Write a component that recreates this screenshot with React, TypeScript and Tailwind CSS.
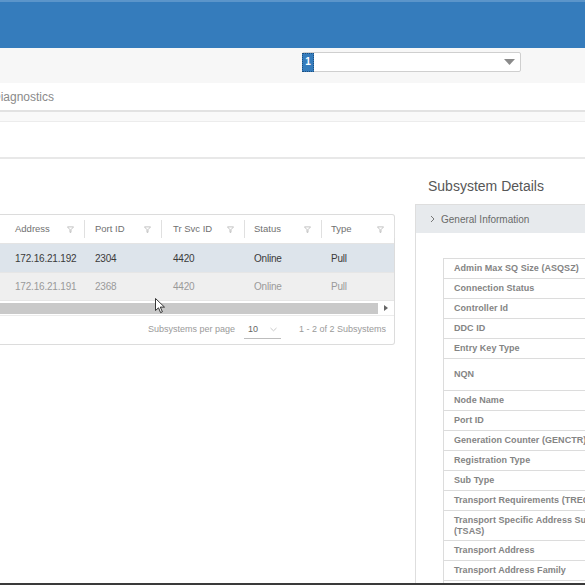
import React from "react";

const FilterIcon = () => (
  <svg width="7" height="7" viewBox="0 0 8 8" className="shrink-0">
    <path d="M0.5 1 H7.5 L4.6 4.2 V7.2 H3.4 V4.2 Z" fill="none" stroke="#b5b5b5" strokeWidth="0.9" />
  </svg>
);

type Col = { title: string; w: string; pl: string };
const cols: Col[] = [
  { title: "Address", w: "w-[85px]", pl: "pl-[15px]" },
  { title: "Port ID", w: "w-[77px]", pl: "pl-[10px]" },
  { title: "Tr Svc ID", w: "w-[83px]", pl: "pl-[11px]" },
  { title: "Status", w: "w-[77px]", pl: "pl-[9px]" },
  { title: "Type", w: "w-[73px]", pl: "pl-[9px]" },
];

const rows = [
  { cells: ["172.16.21.192", "2304", "4420", "Online", "Pull"], bg: "bg-[#dde4eb]", color: "text-[#3a3a3a]", h: "h-[29px]" },
  { cells: ["172.16.21.191", "2368", "4420", "Online", "Pull"], bg: "bg-[#efefef]", color: "text-[#9a9a9a]", h: "h-[28px]" },
];

const details: { label: React.ReactNode; h: string }[] = [
  { label: "Admin Max SQ Size (ASQSZ)", h: "h-[20px]" },
  { label: "Connection Status", h: "h-[20px]" },
  { label: "Controller Id", h: "h-[20px]" },
  { label: "DDC ID", h: "h-[20px]" },
  { label: "Entry Key Type", h: "h-[20px]" },
  { label: "NQN", h: "h-[32px]" },
  { label: "Node Name", h: "h-[20px]" },
  { label: "Port ID", h: "h-[20px]" },
  { label: "Generation Counter (GENCTR)", h: "h-[20px]" },
  { label: "Registration Type", h: "h-[20px]" },
  { label: "Sub Type", h: "h-[20px]" },
  { label: "Transport Requirements (TREQ)", h: "h-[20px]" },
  {
    label: (
      <>
        Transport Specific Address Subtype
        <br />
        (TSAS)
      </>
    ),
    h: "h-[30px]",
  },
  { label: "Transport Address", h: "h-[20px]" },
  { label: "Transport Address Family", h: "h-[20px]" },
  { label: "Transport Type", h: "h-[20px]" },
];

export default function App() {
  return (
    <div
      className="relative w-[585px] h-[585px] overflow-hidden bg-white flex flex-col"
      style={{ fontFamily: '"Liberation Sans", Arial, sans-serif' }}
    >
      {/* Blue header */}
      <div className="h-[48px] shrink-0 bg-[#357cbc] border-t-[2px] border-[#5b95ca]" />

      {/* Toolbar band */}
      <div className="h-[35px] shrink-0 bg-[#f7f7f7] pl-[302px] pt-[4px]">
        <div className="w-[219px] h-[20px] bg-white border border-[#cfcfcf] rounded-[2px] flex items-center justify-between pr-[5px]">
          <div className="w-[12px] h-[19px] ml-[-1px] bg-[#357cbc] border border-dotted border-[#1d4f80] text-white text-[10px] font-bold leading-none flex items-center justify-center">
            1
          </div>
          <svg width="11" height="6" viewBox="0 0 11 6">
            <path d="M0 0 H11 L5.5 6 Z" fill="#8a8a8a" />
          </svg>
        </div>
      </div>

      {/* Tabs row */}
      <div className="h-[29px] shrink-0 bg-white border-b-[2px] border-[#e2e2e2] flex items-center overflow-hidden">
        <span className="ml-[-8px] text-[12px] text-[#8a8a8a]">Diagnostics</span>
      </div>
      <div className="h-[10px] shrink-0 bg-[#f9f9f9] border-b border-[#ececec]" />
      <div className="h-[37px] shrink-0 bg-white border-b-[2px] border-[#e8e8e8]" />

      {/* Content */}
      <div className="flex-1 flex gap-[20px] min-h-0">
        {/* Left table */}
        <div className="w-[395px] shrink-0 pt-[55px]">
          <div className="border border-l-0 border-[#dcdcdc] rounded-r-[3px] bg-white">
            <div className="h-[29px] flex border-b border-[#e4e4e4]">
              {cols.map((c) => (
                <div key={c.title} className={`${c.w} ${c.pl} shrink-0 flex items-center`}>
                  <span className="flex-1 text-[9.5px] text-[#707070]">{c.title}</span>
                  <span className="mr-[10px]">
                    <FilterIcon />
                  </span>
                  <span className="w-px h-[18px] bg-[#e0e0e0]" />
                </div>
              ))}
            </div>
            {rows.map((r, i) => (
              <div key={i} className={`${r.h} flex ${r.bg} border-b border-[#e6e6e6]`}>
                {r.cells.map((cell, j) => (
                  <div
                    key={j}
                    className={`${cols[j].w} ${cols[j].pl} shrink-0 flex items-center text-[10px] tracking-[-0.2px] ${r.color}`}
                  >
                    {cell}
                  </div>
                ))}
              </div>
            ))}
            <div className="h-[14px] flex items-center">
              <div className="w-[378px] h-[11px] bg-[#c9c9c9]" />
              <div className="flex-1 flex justify-center">
                <svg width="4" height="6" viewBox="0 0 4 6">
                  <path d="M0 0 L4 3 L0 6 Z" fill="#666" />
                </svg>
              </div>
            </div>
            <div className="h-[29px] flex items-center text-[9px] text-[#9a9a9a] border-t border-[#ececec]">
              <span className="ml-[148px]">Subsystems per page</span>
              <div className="ml-[9px] w-[37px] h-[17px] border-b border-[#bdbdbd] flex items-center justify-between px-[4px] text-[#666]">
                <span>10</span>
                <svg width="7" height="5" viewBox="0 0 7 5">
                  <path d="M0.5 1 L3.5 3.8 L6.5 1" fill="none" stroke="#c2c2c2" strokeWidth="0.9" />
                </svg>
              </div>
              <span className="ml-[18px]">1 - 2 of 2 Subsystems</span>
            </div>
          </div>
        </div>

        {/* Right details */}
        <div className="flex-1 min-w-0 flex flex-col">
          <div className="shrink-0 pl-[13px] pt-[17px] h-[45px] text-[14px] text-[#575757] leading-[20px]">
            Subsystem Details
          </div>
          <div className="flex-1 border-l border-t border-[#dedede]">
            <div className="h-[28px] bg-[#e7eaed] flex items-center pl-[14px] gap-[6px] text-[10px] text-[#6a6a6a]">
              <svg width="5" height="8" viewBox="0 0 5 8">
                <path d="M1 1 L4 4 L1 7" fill="none" stroke="#777" strokeWidth="1" />
              </svg>
              <span>General Information</span>
            </div>
            <div className="pl-[27px] pt-[25px]">
              <div className="w-[320px] border-l border-t border-[#dcdcdc]">
                {details.map((d, i) => (
                  <div
                    key={i}
                    className={`${d.h} flex items-center pl-[10px] border-b border-[#dcdcdc] text-[9px] tracking-[0.05px] leading-[11px] font-bold text-[#848484] whitespace-nowrap`}
                  >
                    <span>{d.label}</span>
                  </div>
                ))}
              </div>
            </div>
          </div>
        </div>
      </div>

      {/* Bottom dark edge */}
      <div className="absolute left-0 right-0 bottom-0 h-[2px] bg-[#3a3a3a]" />

      {/* Mouse cursor */}
      <svg className="absolute left-[155px] top-[298px]" width="11" height="16" viewBox="0 0 11 16">
        <path
          d="M0.5 0.5 L0.5 12.5 L3.5 9.8 L5.6 14.6 L7.4 13.8 L5.3 9.1 L9.5 9.1 Z"
          fill="#fff"
          stroke="#222"
          strokeWidth="0.9"
          strokeLinejoin="round"
        />
      </svg>
    </div>
  );
}
